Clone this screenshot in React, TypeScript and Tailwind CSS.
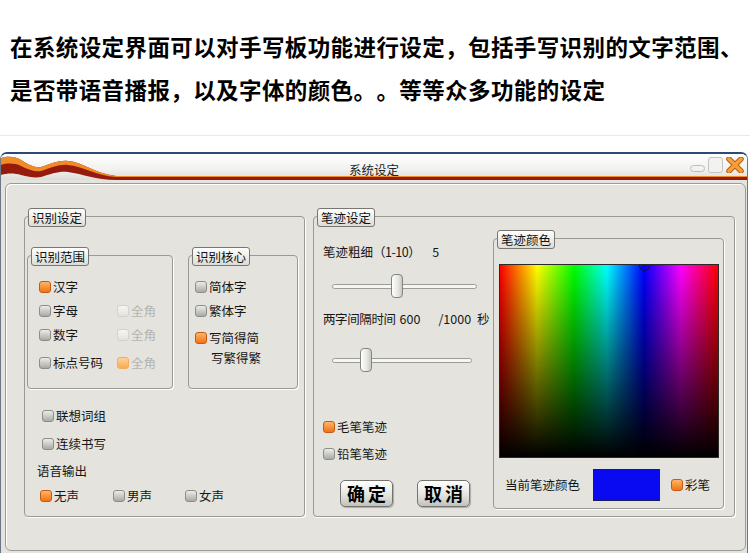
import React from 'react';

type CbState = 'on' | 'off' | 'dis' | 'disOn';

function Check({ state = 'off' }: { state?: CbState }) {
  const styles: Record<CbState, string> = {
    on: 'border-[#c35c12] bg-[linear-gradient(#ffb46a,#ef7412)]',
    off: 'border-[#8d8d8a] bg-[linear-gradient(#ececea,#a9a9a6)]',
    dis: 'border-[#d2d2cf] bg-[linear-gradient(#f6f6f4,#e2e2df)]',
    disOn: 'border-[#f2ad5a] bg-[linear-gradient(#ffd199,#f8ad50)]',
  };
  return <div className={`w-[12px] h-[12px] shrink-0 rounded-[3px] border ${styles[state]}`} />;
}

function Item({ state, label, muted }: { state?: CbState; label: string; muted?: boolean }) {
  return (
    <div className="flex items-center">
      <Check state={state} />
      <span className={`ml-[2px] ${muted ? 'text-[#b4b4b0]' : 'text-[#161616]'}`}>{label}</span>
    </div>
  );
}

function Legend({ children }: { children: React.ReactNode }) {
  return (
    <div className="absolute -top-[9px] left-[3px] h-[19px] px-[3px] rounded-[3px] border border-[#77776f] bg-[linear-gradient(#ffffff,#dcdcd8)] text-[12.5px] leading-[17px] text-[#111]">
      {children}
    </div>
  );
}

function Slider({ width, pos }: { width: number; pos: number }) {
  return (
    <div className="relative h-[24px]" style={{ width }}>
      <div className="absolute left-0 right-0 top-[10px] h-[5px] rounded-[3px] border border-[#9c9c98] bg-[#f6f6f4]" />
      <div
        className="absolute top-0 w-[12px] h-[24px] rounded-[4px] border border-[#85857f] bg-[linear-gradient(to_right,#ffffff,#e6e6e2_60%,#c9c9c4)]"
        style={{ left: pos }}
      />
    </div>
  );
}

function BigButton({ children }: { children: React.ReactNode }) {
  return (
    <button className="w-[53px] h-[27px] rounded-[5px] border border-[#74746e] bg-[linear-gradient(#ffffff,#e4e4e0_55%,#c2c2bd)] shadow-[1px_1px_1px_rgba(0,0,0,0.25)] text-[18px] leading-[25px] font-bold tracking-[3px] pl-[3px] text-black">
      {children}
    </button>
  );
}

export default function App() {
  return (
    <div className="w-[750px] h-[553px] overflow-hidden bg-white font-['Noto_Sans_CJK_SC','Noto_Sans',sans-serif] [text-spacing-trim:space-all]">
      <div className="pt-[25px] pl-[10px] text-[22.5px] leading-[43px] font-bold tracking-[0.4px] text-black whitespace-nowrap">
        <p>在系统设定界面可以对手写板功能进行设定，包括手写识别的文字范围、</p>
        <p>是否带语音播报，以及字体的颜色。。等等众多功能的设定</p>
      </div>
      <div className="mt-[24px] h-px bg-[#e9e9e9]" />

      {/* window */}
      <div className="mt-[16px] w-[748px] rounded-t-[7px] border-t-2 border-x border-[#2c4a78] border-x-[#6b7789] overflow-hidden">
        <div className="relative h-[26px] bg-[linear-gradient(#ffffff,#f1f1ef_60%,#dcdcd8)]">
          <svg className="absolute inset-0" width="748" height="26" viewBox="0 0 748 26">
            <path
              d="M0,4 C6,2 14,2 20,6 C28,11 34,14 40,13 C50,10 58,6 67,7 C82,8 95,20 115,22 L748,22 L748,26 L115,26 C95,26 82,20 67,18 C58,17 50,20 40,23 C34,24 28,23 20,21 C14,19 6,19 0,21 Z"
              fill="#961b0d"
            />
            <path
              d="M0,4 C6,2 14,2 20,6 C28,11 34,14 40,13 C50,10 58,6 67,7 C82,8 95,20 115,22 L748,22 L748,23 L115,23 C95,22 82,12 67,11 C58,10 50,14 40,17 C34,18 28,16 20,12 C14,9 6,9 0,11 Z"
              fill="#f28a26"
            />
          </svg>
          <div className="relative flex justify-center pt-[8px] text-[12.5px] leading-[16px] text-[#222]">系统设定</div>
          <div className="absolute right-[3px] top-[3px] flex items-end gap-[3px]">
            <div className="mb-[1px] w-[15px] h-[7px] rounded-full border border-[#bdbdb9]" />
            <div className="w-[15px] h-[16px] rounded-[3px] border border-[#c4c4c0] bg-[#f2f2f0]" />
            <svg width="18" height="16" viewBox="0 0 18 16">
              <path d="M3,2 L15,14 M15,2 L3,14" stroke="#b85a0c" strokeWidth="5.5" strokeLinecap="round" />
              <path d="M3,2 L15,14 M15,2 L3,14" stroke="#f7a03a" strokeWidth="3.5" strokeLinecap="round" />
            </svg>
          </div>
        </div>

        <div className="h-[373px] bg-[#e4e3de] pt-[3px]">
          <div className="ml-[4px] w-[741px] h-[368px] rounded-[6px] border border-[#9b9b96] shadow-[inset_1px_1px_0_#ffffff] pt-[32px] pl-[18px] flex gap-[8px] text-[12.5px] leading-[20px] text-[#161616] whitespace-nowrap">
            {/* 识别设定 */}
            <div className="relative w-[281px] h-[301px] rounded-[4px] border border-[#9a9a95] shadow-[1px_1px_0_#ffffff]">
              <Legend>识别设定</Legend>
              <div className="flex gap-[15px] pt-[38px] pl-[2px]">
                <div className="relative w-[146px] h-[134px] rounded-[4px] border border-[#9a9a95] shadow-[1px_1px_0_#ffffff] pt-[19px] pl-[11px]">
                  <Legend>识别范围</Legend>
                  <div className="flex items-center h-[24px]">
                    <div className="w-[78px]"><Item state="on" label="汉字" /></div>
                  </div>
                  <div className="flex items-center h-[24px]">
                    <div className="w-[78px]"><Item label="字母" /></div>
                    <Item state="dis" label="全角" muted />
                  </div>
                  <div className="flex items-center h-[24px]">
                    <div className="w-[78px]"><Item label="数字" /></div>
                    <Item state="dis" label="全角" muted />
                  </div>
                  <div className="flex items-center h-[24px] mt-[4px]">
                    <div className="w-[78px]"><Item label="标点号码" /></div>
                    <Item state="disOn" label="全角" muted />
                  </div>
                </div>
                <div className="relative w-[110px] h-[134px] rounded-[4px] border border-[#9a9a95] shadow-[1px_1px_0_#ffffff] pt-[19px] pl-[6px]">
                  <Legend>识别核心</Legend>
                  <div className="flex items-center h-[24px]"><Item label="简体字" /></div>
                  <div className="flex items-center h-[24px]"><Item label="繁体字" /></div>
                  <div className="flex items-center h-[24px] mt-[3px]"><Item state="on" label="写简得简" /></div>
                  <div className="h-[16px] leading-[16px] pl-[16px]">写繁得繁</div>
                </div>
              </div>
              <div className="mt-[17px] ml-[17px] h-[20px] flex items-center"><Item label="联想词组" /></div>
              <div className="mt-[8px] ml-[17px] h-[20px] flex items-center"><Item label="连续书写" /></div>
              <div className="mt-[7px] ml-[12px] h-[20px]">语音输出</div>
              <div className="mt-[5px] ml-[15px] h-[20px] flex items-center">
                <div className="w-[73px]"><Item state="on" label="无声" /></div>
                <div className="w-[72px]"><Item label="男声" /></div>
                <Item label="女声" />
              </div>
            </div>

            {/* 笔迹设定 */}
            <div className="relative w-[422px] h-[301px] rounded-[4px] border border-[#9a9a95] shadow-[1px_1px_0_#ffffff] flex">
              <Legend>笔迹设定</Legend>
              <div className="w-[179px] shrink-0">
                <div className="mt-[25px] ml-[9px] h-[20px] flex">
                  <span>笔迹粗细</span>
                  <span className="tracking-[-0.5px]">（1-10）</span>
                  <span className="ml-[12px]">5</span>
                </div>
                <div className="mt-[12px] ml-[18px]"><Slider width={145} pos={59} /></div>
                <div className="mt-[11px] ml-[9px] h-[20px] flex">
                  <span className="tracking-[-0.4px]">两字间隔时间</span>
                  <span className="ml-[4px]">600</span>
                  <span className="ml-[18px]">/1000</span>
                  <span className="ml-[6px]">秒</span>
                </div>
                <div className="mt-[19px] ml-[18px]"><Slider width={140} pos={28} /></div>
                <div className="mt-[45px] ml-[9px] h-[20px] flex items-center"><Item state="on" label="毛笔笔迹" /></div>
                <div className="mt-[7px] ml-[9px] h-[20px] flex items-center"><Item label="铅笔笔迹" /></div>
                <div className="mt-[16px] ml-[26px] flex gap-[24px]">
                  <BigButton>确定</BigButton>
                  <BigButton>取消</BigButton>
                </div>
              </div>

              {/* 笔迹颜色 */}
              <div className="relative mt-[21px] w-[231px] h-[271px] rounded-[4px] border border-[#9a9a95] shadow-[1px_1px_0_#ffffff]">
                <Legend>笔迹颜色</Legend>
                <div className="relative mt-[25px] ml-[5px] w-[220px] h-[194px] border border-[#2a2a2a] overflow-hidden bg-[linear-gradient(to_right,#ff0000,#ffff00_17%,#00ff00_34%,#00ffff_49%,#0000ff_66%,#ff00ff_83%,#ff0000)]">
                  <div className="absolute inset-0 bg-[linear-gradient(to_bottom,rgba(0,0,0,0),rgba(0,0,0,0.55)_55%,#000000)]" />
                  <div className="absolute -top-[5px] left-[139px] w-[11px] h-[11px] rounded-full border-[1.5px] border-[#14143a]" />
                </div>
                <div className="mt-[11px] ml-[11px] h-[32px] flex items-center">
                  <span>当前笔迹颜色</span>
                  <div className="ml-[13px] w-[67px] h-[32px] border border-[#1c1c5c] bg-[#0a0af2]" />
                  <div className="ml-[11px]"><Item state="on" label="彩笔" /></div>
                </div>
              </div>
            </div>
          </div>
        </div>
      </div>
    </div>
  );
}
